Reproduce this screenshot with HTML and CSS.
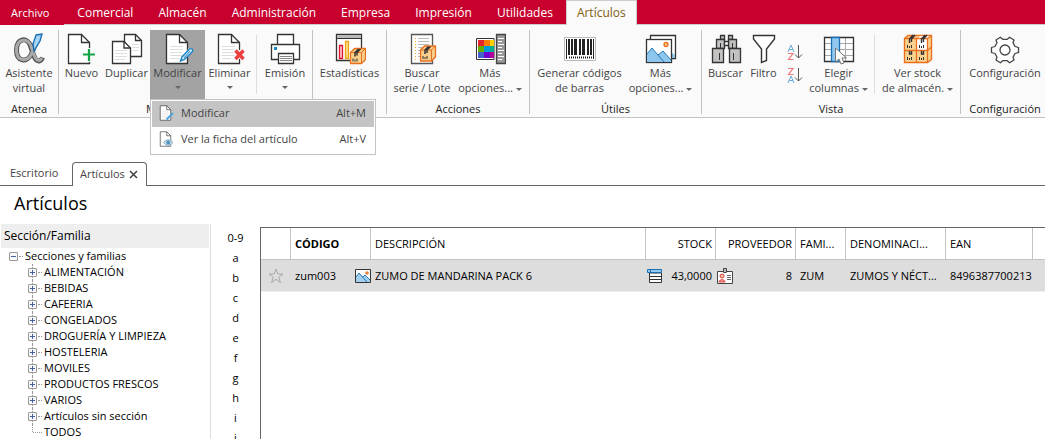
FILE: index.html
```html
<!DOCTYPE html>
<html lang="es">
<head>
<meta charset="utf-8">
<title>Artículos</title>
<link rel="stylesheet" href="styles.css">
</head>
<body>
<svg class="defs" aria-hidden="true">
  <defs>
    <g id="sheet"><path d="M4.500 1.500H17.500L25.500 9.500V30.500H4.500Z" fill="#fff" stroke="#333" stroke-width="1.300"/><path d="M17.500 1.500V9.500H25.500" fill="none" stroke="#333" stroke-width="1.300"/></g>
    <g id="lines"><path d="M8 13.500H21M8 16.500H21M8 19.500H20M8 22.500H20M8 25.500H17" stroke="#ddd" fill="none"/></g>
    <g id="box"><path d="M1 5L5 1H16V12L12 16H1Z" fill="#f9cf8c" stroke="#e8701f" stroke-width="1.300" stroke-linejoin="round"/><path d="M1 5H12V16M12 5L16 1" fill="none" stroke="#e8701f"/><path d="M5.500 9V5L9 1.500M7.500 8V5L11 1.500" fill="none" stroke="#333" stroke-width="1.500"/><path d="M3.500 11V14M5.500 12V14M7.500 11V14" stroke="#333"/></g>
    <g id="picture"><rect x="1.500" y="5.500" width="25" height="23" fill="#fff" stroke="#333" stroke-width="1.300"/><path d="M2 20L7 14L13 21L18 17L26 26V28H2Z" fill="#8cc6ee"/><path d="M2 20L7 14L19 28M13 21L18 17L26 26" fill="none" stroke="#2679b5"/><circle cx="21" cy="10.500" r="2" fill="#fbc489" stroke="#e8701f" stroke-width="1.300"/></g>
  </defs>
</svg>

<header>
  <nav class="menubar" aria-label="Menú principal">
    <a class="file" href="#">Archivo</a>
    <a href="#">Comercial</a>
    <a href="#">Almacén</a>
    <a href="#">Administración</a>
    <a href="#">Empresa</a>
    <a href="#">Impresión</a>
    <a href="#">Utilidades</a>
    <a class="current" href="#" aria-current="page">Artículos</a>
  </nav>

  <div class="ribbon">
    <section class="group g-atenea">
      <div class="tools">
        <button class="tool"><svg viewBox="0 0 32 32"><path d="M29.500 24.500C27.500 30 23 28.500 21 23L17.500 13C14.500 3.500 3.500 5 3.500 17C3.500 29 14 30 18.500 21L22 11" fill="none" stroke="#555" stroke-width="5"/><path d="M28.800 25C27 29 23.500 28 21.500 23L18 13C15 4 3.500 5.500 3.500 17C3.500 28.500 14 29.500 18.500 21L22 12" fill="none" stroke="#aaa" stroke-width="3"/><path d="M23 2L29 1L27 8L21 18L20 11Z" fill="#a2d4f5" stroke="#1769aa" stroke-width="1.300"/></svg><span>Asistente<br>virtual</span></button>
      </div>
      <h2>Atenea</h2>
    </section>

    <section class="group g-mant">
      <div class="tools">
        <button class="tool"><svg viewBox="0 0 32 32"><use href="#sheet" x="-2"/><path d="M16 21.500H30M23 15V29" stroke="#fafafa" stroke-width="5"/><path d="M17 21.500H29M23 16V28" stroke="#14a54a" stroke-width="2.200"/></svg><span>Nuevo</span></button>
        <button class="tool"><svg viewBox="0 0 32 32"><path d="M13.500 1.500H24.500L30.500 7.500V23.500H13.500Z" fill="#fff" stroke="#333" stroke-width="1.300"/><path d="M24.500 1.500V7.500H30.500" fill="none" stroke="#333" stroke-width="1.300"/><path d="M21 11.500H28M21 14.500H28M21 17.500H28" stroke="#ddd"/><path d="M1.500 8.500H13L19.500 15V30.500H1.500Z" fill="#fff" stroke="#333" stroke-width="1.300"/><path d="M13 8.500V15H19.500" fill="none" stroke="#333" stroke-width="1.300"/><path d="M4 17.500H16M4 20.500H16M4 23.500H16M4 26.500H14" stroke="#ddd"/></svg><span>Duplicar</span></button>
        <div class="dropdown">
          <button class="tool open" aria-expanded="true"><svg viewBox="0 0 32 32"><use href="#sheet"/><use href="#lines"/><path d="M18 26L27 15L31 17L21 27L18 29Z" fill="#fff"/><path d="M18.500 28L20 24L27 16.500C29 14.500 32 16.500 30 19L22.500 26.500Z" fill="#d9eefb" stroke="#1c83c6" stroke-width="1.400"/><path d="M22 25L28 18" stroke="#1c83c6"/></svg><span>Modificar</span><i class="arrow"></i></button>
          <div class="menu" role="menu">
            <button role="menuitem" class="active"><svg viewBox="0 0 32 32"><use href="#sheet"/><use href="#lines"/><path d="M17 29L30 16" stroke="#4aa3dc" stroke-width="4"/></svg><span>Modificar</span><kbd>Alt+M</kbd></button>
            <button role="menuitem"><svg viewBox="0 0 32 32"><use href="#sheet"/><path d="M11 23Q20 12 30 23Q20 34 11 23Z" fill="#d3e5ef" stroke="#88a9bd" stroke-width="2"/><circle cx="20.500" cy="23" r="4" fill="#4b93c0"/></svg><span>Ver la ficha del artículo</span><kbd>Alt+V</kbd></button>
          </div>
        </div>
        <button class="tool"><svg viewBox="0 0 32 32"><use href="#sheet"/><use href="#lines"/><path d="M20 16L31 27M31 16L20 27" stroke="#fafafa" stroke-width="6"/><path d="M21.500 17.500L29.500 26M29.500 17.500L21.500 26" stroke="#ee3d3d" stroke-width="3.400"/></svg><span>Eliminar</span><i class="arrow"></i></button>
        <div class="divider"></div>
        <button class="tool"><svg viewBox="0 0 32 32"><g fill="#fff" stroke="#333" stroke-width="1.300"><path d="M8.500 11V1.500H24.500V11"/><path d="M2.500 11.500H30.500V26.500H2.500Z"/><path d="M9.500 20.500H24.500V30.500H9.500Z"/></g><path d="M5 14H8V17H5Z" fill="#1c83c6"/><path d="M11 23.500H23M11 25.500H23M11 27.500H23" stroke="#888"/></svg><span>Emisión</span><i class="arrow"></i></button>
      </div>
      <h2>Mantenimiento</h2>
    </section>

    <section class="group g-stats">
      <div class="tools">
        <button class="tool"><svg viewBox="0 0 32 32"><path d="M2.500 1.500H27.500V27.500H2.500Z" fill="#fff" stroke="#333" stroke-width="1.300"/><path d="M3 2H27V5H3Z" fill="#bbb"/><path d="M3 5.500H27" stroke="#333"/><path d="M5.500 12.500H8.500V25.500H5.500Z" fill="#fcc9cf" stroke="#df1230" stroke-width="1.300"/><path d="M11.500 8.500H14.500V25.500H11.500Z" fill="#fbe08b" stroke="#efa118" stroke-width="1.300"/><use href="#box" x="15.500" y="14.500"/></svg><span>Estadísticas</span></button>
      </div>
      <h2></h2>
    </section>

    <section class="group g-acc">
      <div class="tools">
        <button class="tool"><svg viewBox="0 0 32 32"><path d="M5.500 1.500H26.500V30.500H5.500Z" fill="#fff" stroke="#555" stroke-width="1.300"/><path d="M9.500 5V28" stroke="#f5a52a" stroke-dasharray="1 2"/><path d="M12 5.500H23M12 8.500H23M12 11.500H23M12 14.500H23M12 17.500H23M12 20.500H18M12 23.500H18" stroke="#bbb"/><use href="#box" x="13.500" y="12"/></svg><span>Buscar<br>serie / Lote</span></button>
        <button class="tool"><svg viewBox="0 0 32 32"><path d="M2.500 5.500H20V26.500H2.500Z" fill="#fff" stroke="#333"/><path d="M4 7H10V13H4Z" fill="#e3242b"/><path d="M10 7H16V13H10Z" fill="#ff7c00"/><path d="M16 7H20V13H16Z" fill="#ffd000"/><path d="M4 13H10V19H4Z" fill="#65ab00"/><path d="M10 13H16V19H10Z" fill="#009bd9"/><path d="M16 13H20V19H16Z" fill="#00ad91"/><path d="M4 19H10V25H4Z" fill="#4560cf"/><path d="M10 19H16V25H10Z" fill="#6f00cf"/><path d="M16 19H20V25H16Z" fill="#b3009d"/><path d="M22.500 1.500H31.500V30.500H22.500Z" fill="#999" stroke="#444" stroke-width="1.300"/><path d="M24 5.500H30M24 8.500H28M24 11.500H30M24 14.500H28M24 17.500H30M24 20.500H28M24 23.500H30M24 26.500H28" stroke="#fff"/></svg><span>Más<br>opciones... <i class="arrow"></i></span></button>
      </div>
      <h2>Acciones</h2>
    </section>

    <section class="group g-utiles">
      <div class="tools">
        <button class="tool"><svg viewBox="0 0 32 32"><path d="M.500 4.500H31.500V27.500H.500Z" fill="#fff" stroke="#bbb"/><path d="M2.500 6V26M29.500 6V26" stroke="#222"/><path d="M5 6V22M8 6V22M12 6V22M16 6V22M20 6V22M24 6V22M27 6V22" stroke="#222" stroke-width="2"/><path d="M10.500 6V22M18.500 6V22" stroke="#222"/><path d="M5 24.500H28" stroke="#222" stroke-width="2" stroke-dasharray="1 1"/></svg><span>Generar códigos<br>de barras</span></button>
        <button class="tool"><svg viewBox="0 0 32 32"><path d="M5.500 2.500H30.500V25.500H5.500Z" fill="#fff" stroke="#333" stroke-width="1.300"/><path d="M26 25V19L30 22V25Z" fill="#8cc6ee"/><use href="#picture" y="1"/></svg><span>Más<br>opciones... <i class="arrow"></i></span></button>
      </div>
      <h2>Útiles</h2>
    </section>

    <section class="group g-vista">
      <div class="tools">
        <button class="tool"><svg viewBox="0 0 32 32"><g fill="#c3c2c1" stroke="#333" stroke-width="1.300"><path d="M10.500 2.500H14.500V6.500H10.500ZM18.500 2.500H22.500V6.500H18.500Z"/><path d="M6.500 6.500H14.500V15.500H6.500ZM18.500 6.500H26.500V15.500H18.500Z"/><path d="M14.500 8.500H18.500V12.500H14.500Z" fill="#fff"/><path d="M2.500 15.500H13.500V29.500H2.500ZM19.500 15.500H30.500V29.500H19.500Z"/></g><path d="M10.500 10V15M9.500 20V27M22.500 10V15M23.500 20V27" stroke="#333"/></svg><span>Buscar</span></button>
        <button class="tool"><svg viewBox="0 0 32 32"><path d="M5.500 2.500H26.500V6L18.500 16V27.500L13.500 29.500V16L5.500 6Z" fill="#fff" stroke="#333" stroke-width="1.400"/></svg><span>Filtro</span></button>
        <div class="sorts">
          <button aria-label="Orden ascendente"><svg viewBox="0 0 16 18"><path d="M1 8L4 1L7 8M2 5.500H6" fill="none" stroke="#69abd8"/><path d="M1 9.500H6L1.500 15.500H6.500" fill="none" stroke="#ef777c" stroke-width="1.200"/><path d="M11.500 1V14M8 10.500L11.500 14L15 10.500" fill="none" stroke="#555"/></svg></button>
          <button aria-label="Orden descendente"><svg viewBox="0 0 16 18"><path d="M1 1.500H6L1.500 7.500H6.500" fill="none" stroke="#ef777c" stroke-width="1.200"/><path d="M1 16L4 9L7 16M2 13.500H6" fill="none" stroke="#69abd8"/><path d="M11.500 1V14M8 10.500L11.500 14L15 10.500" fill="none" stroke="#555"/></svg></button>
        </div>
        <button class="tool"><svg viewBox="0 0 32 32"><path d="M1.500 4.500H30.500V28.500H1.500Z" fill="#fff"/><path d="M2 10.500H30M2 16.500H30M2 22.500H30M22.500 5V28" stroke="#aaa"/><path d="M1.500 4.500H30.500V28.500H1.500Z" fill="none" stroke="#333" stroke-width="1.300"/><path d="M8.500 4.500H16.500V28.500H8.500Z" fill="#91c9f1" stroke="#1c70b2" stroke-width="1.300"/><path d="M12.500 15L23.500 25H19L21 30L18 31L16 26L12.500 29Z" fill="#fff" stroke="#777"/></svg><span>Elegir<br>columnas <i class="arrow"></i></span></button>
        <div class="divider"></div>
        <button class="tool"><svg viewBox="0 0 32 32"><path d="M2.500 5.500L6 2.500H29.500V26.500L25.500 29.500H2.500Z" fill="#fad391" stroke="#e8701f" stroke-width="1.400"/><path d="M15 6H25V17H15ZM18 3H28L25 6H15Z" fill="#fff"/><path d="M2.500 5.500H25.500V29.500M25.500 5.500L29.500 2.500M2.500 17.500H25.500L29.500 14M14.500 5.500V29.500" fill="none" stroke="#e8701f" stroke-width="1.300"/><path d="M7.500 10V6L11 2M9.500 9V6L13 2M19.500 10V6L23 2M21.500 9V6L25 2M7.500 18V21H9.500V18M19.500 18V21H21.500V18" fill="none" stroke="#333" stroke-width="1.400"/><path d="M5.500 12V15M7.500 13V15M9.500 12V15M17.500 12V15M19.500 13V15M21.500 12V15M5.500 24V27M7.500 25V27M9.500 24V27M17.500 24V27M19.500 25V27M21.500 24V27" stroke="#333"/></svg><span>Ver stock<br>de almacén. <i class="arrow"></i></span></button>
      </div>
      <h2>Vista</h2>
    </section>

    <section class="group g-conf">
      <div class="tools">
        <button class="tool"><svg viewBox="0 0 32 32"><g transform="translate(16 17)" fill="#fff" stroke="#444" stroke-width="1.300" stroke-linejoin="round"><path d="M13.500 -2.500V2.500L10 3.500L8 7.200L9 10L4.600 12.800L2 10.600H-2L-4.600 12.800L-9 10L-8 7.200L-10 3.500L-13.500 2.500V-2.500L-10 -3.500L-8 -7.200L-9 -10L-4.600 -12.800L-2 -10.600H2L4.600 -12.800L9 -10L8 -7.200L10 -3.500Z"/><circle r="5"/></g></svg><span>Configuración</span></button>
      </div>
      <h2>Configuración</h2>
    </section>
  </div>
</header>

<nav class="doctabs" aria-label="Ventanas">
  <a href="#">Escritorio</a>
  <div class="doctab"><a href="#" aria-current="page">Artículos</a><button aria-label="Cerrar"><svg viewBox="0 0 9 9"><path d="M1 1L8 8M8 1L1 8" stroke="#444" stroke-width="1.600"/></svg></button></div>
</nav>

<main>
  <h1>Artículos</h1>
  <div class="content">
    <aside>
      <h2>Sección/Familia</h2>
      <div class="root"><button class="node minus" aria-label="Contraer"></button><span>Secciones y familias</span></div>
      <ul class="tree">
        <li><button class="node" aria-label="Expandir"></button>ALIMENTACIÓN</li>
        <li><button class="node" aria-label="Expandir"></button>BEBIDAS</li>
        <li><button class="node" aria-label="Expandir"></button>CAFEERIA</li>
        <li><button class="node" aria-label="Expandir"></button>CONGELADOS</li>
        <li><button class="node" aria-label="Expandir"></button>DROGUERÍA Y LIMPIEZA</li>
        <li><button class="node" aria-label="Expandir"></button>HOSTELERIA</li>
        <li><button class="node" aria-label="Expandir"></button>MOVILES</li>
        <li><button class="node" aria-label="Expandir"></button>PRODUCTOS FRESCOS</li>
        <li><button class="node" aria-label="Expandir"></button>VARIOS</li>
        <li><button class="node" aria-label="Expandir"></button>Artículos sin sección</li>
        <li class="leaf">TODOS</li>
      </ul>
    </aside>
    <nav class="letters" aria-label="Índice alfabético">
      <a href="#">0-9</a><a href="#">a</a><a href="#">b</a><a href="#">c</a><a href="#">d</a><a href="#">e</a><a href="#">f</a><a href="#">g</a><a href="#">h</a><a href="#">i</a><a href="#">j</a>
    </nav>
    <div class="grid">
      <table>
        <colgroup><col class="c-star"><col class="c-code"><col><col class="c-stock"><col class="c-prov"><col class="c-fam"><col class="c-den"><col class="c-ean"><col class="c-more"></colgroup>
        <thead>
          <tr><th></th><th class="sorted">CÓDIGO</th><th>DESCRIPCIÓN</th><th class="num">STOCK</th><th class="num">PROVEEDOR</th><th>FAMI...</th><th>DENOMINACI...</th><th>EAN</th><th></th></tr>
        </thead>
        <tbody>
          <tr>
            <td class="star"><svg viewBox="0 0 16 16"><path d="M8 1L9.800 6H15L10.800 9.200L12.400 14.500L8 11.300L3.600 14.500L5.200 9.200L1 6H6.200Z" fill="none" stroke="#aaa"/></svg></td>
            <td><div class="cell icon-end">zum003<svg viewBox="0 0 16 14"><path d="M.500 .500H15.500V13.500H.500Z" fill="#fff"/><path d="M1 8L4 4L8 8L10 6L15 11V13H1Z" fill="#a3d0ef"/><path d="M1 8L4 4L12 13M8 8L10 6L15 11" fill="none" stroke="#2679b5"/><circle cx="12" cy="4" r="1.800" fill="#ef823d"/><path d="M.500 .500H15.500V13.500H.500Z" fill="none" stroke="#333"/></svg></div></td>
            <td>ZUMO DE MANDARINA PACK 6</td>
            <td><div class="cell icon-start"><svg viewBox="0 0 16 14"><path d="M2.500 4H14.500V13.500H2.500Z" fill="#fff" stroke="#333"/><path d="M3 7.500H14M3 10.500H14" stroke="#333"/><path d="M.500 .500H14.500V3.500H.500Z" fill="#91c9f1" stroke="#1c70b2"/><path d="M3.500 1V3" stroke="#1c70b2"/></svg>43,0000</div></td>
            <td><div class="cell icon-start prov"><svg viewBox="0 0 16 16"><path d="M.500 3.500H15.500V15.500H.500Z" fill="#fff" stroke="#444"/><path d="M6.500 .500H9.500V4.500H6.500Z" fill="#bbb" stroke="#444"/><path d="M2 14C2 11 8 11 8 14Z" fill="#f6a6a6" stroke="#d9413e"/><circle cx="5" cy="8" r="2" fill="#f8c1a3" stroke="#d9413e"/><path d="M10 7.500H14M10 9.500H14M10 11.500H14" stroke="#666"/></svg>8</div></td>
            <td>ZUM</td><td>ZUMOS Y NÉCT...</td><td>8496387700213</td><td></td>
          </tr>
        </tbody>
      </table>
    </div>
  </div>
</main>
</body>
</html>
```
FILE: styles.css
```css
* { box-sizing: border-box; }
body { margin: 0; height: 100vh; overflow: hidden; display: flex; flex-direction: column; background: #fff; color: #000; font: 11px/16px "Open Sans", "Noto Sans", sans-serif; }
h1, h2 { margin: 0; font-weight: 400; font-size: 11px; }
button { border: 0; padding: 0; margin: 0; background: none; font: inherit; color: inherit; }
a { color: inherit; text-decoration: none; }
svg { display: block; }
.defs { display: none; }

.menubar { display: flex; gap: 1px; height: 24px; background: #c8002d; color: #fff; font-size: 12px; line-height: 26px; }
.menubar a { padding: 0 12px; }
.menubar .file { height: 25px; padding: 0 15px 0 11px; background: #c8002d; font-size: 11px; z-index: 1; }
.menubar .current { height: 25px; padding: 0 10px; background: #fafafa; color: #806010; border: 1px solid #ccc; border-bottom: 0; line-height: 24px; z-index: 1; }

.ribbon { display: flex; height: 94px; padding-top: 5px; background: #fafafa; border-top: 1px solid #ccc; border-bottom: 1px solid #c3c3c3; color: #444; }
.group { flex: none; display: flex; flex-direction: column; height: 84px; border-right: 1px solid #c3c3c3; }
.group h2 { color: #222; text-align: center; height: 15px; line-height: 20px; }
.tools { display: grid; height: 69px; justify-content: center; }
.g-atenea { width: 59px; }
.g-mant { width: 254px; }
.g-stats { width: 74px; }
.g-acc { width: 143px; }
.g-utiles { width: 172px; }
.g-vista { width: 259px; }
.g-conf { border: 0; width: 88px; }
.g-mant .tools { grid-template-columns: 43px 47px 55px 49px 5px 52px; }
.g-acc .tools { grid-template-columns: 70px 66px; justify-content: start; }
.g-utiles .tools { grid-template-columns: 90px 72px; }
.g-vista .tools { grid-template-columns: 40px 36px 26px 62px 9px 78px; }

.tool { display: flex; flex-direction: column; align-items: center; line-height: 15px; white-space: nowrap; height: 69px; padding-top: 3px; }
.tool svg { width: 32px; height: 32px; }
.tool > .arrow { margin-top: 6px; }
.arrow { display: inline-block; border: 3px solid transparent; border-top-color: #666; border-bottom: 0; vertical-align: middle; }
.tool.open { width: 100%; background: #a3a3a3; }
.divider { width: 1px; height: 59px; margin: 5px auto 0; background: #ddd; }
.sorts { display: flex; flex-direction: column; gap: 5px; padding: 14px 0 0 5px; }
.sorts svg { width: 16px; height: 18px; }

.dropdown { position: relative; }
.menu { position: absolute; top: 69px; left: 0; z-index: 5; width: 226px; padding: 1px; background: #fff; border: 1px solid #c3c3c3; }
.menu button { display: flex; align-items: center; width: 100%; height: 26px; padding: 0 8px 3px 6px; text-align: left; }
.menu .active { background: #c4c4c4; }
.menu svg { width: 16px; height: 16px; margin-right: 7px; }
.menu kbd { margin-left: auto; font: inherit; }

.doctabs { display: flex; height: 24px; margin-top: 44px; padding-left: 10px; border-bottom: 1px solid #666; color: #444; line-height: 22px; flex: none; }
.doctabs > a { width: 62px; }
.doctab { display: flex; gap: 4px; align-items: center; height: 24px; padding: 0 8px 1px 7px; background: #fff; border: 1px solid #666; border-bottom: 0; border-radius: 4px 4px 0 0; }
.doctab svg { width: 9px; height: 9px; }

main { flex: 1; min-height: 0; display: flex; flex-direction: column; }
h1 { padding-left: 14px; height: 38px; font-size: 18px; line-height: 34px; }
.content { flex: 1; min-height: 0; display: flex; }
aside { width: 211px; flex: none; padding-left: 1px; border-right: 1px solid #ddd; }
aside h2 { height: 24px; margin-right: 1px; padding-left: 3px; background: #eee; font-size: 12px; line-height: 24px; }
.root, .tree li { display: flex; align-items: center; height: 16px; position: relative; }
.root { gap: 7px; padding-left: 8px; }
.tree { margin: 0; padding: 0 0 0 27px; list-style: none; }
.tree li { gap: 7px; }
.tree li::before { content: ""; position: absolute; left: 4px; top: 0; height: 16px; border-left: 1px dotted #999; }
.tree li::after, .root::after { content: ""; position: absolute; left: 10px; top: 8px; width: 4px; border-top: 1px dotted #999; }
.root::after { left: 18px; }
.tree .leaf { padding-left: 16px; }
.tree .leaf::before { height: 8px; }
.tree .leaf::after { left: 5px; width: 9px; }
.node { position: relative; z-index: 1; flex: none; width: 9px; height: 9px; border: 1px solid #999; border-radius: 1px; background: linear-gradient(#4560a8, #4560a8) center / 5px 1px no-repeat, linear-gradient(#4560a8, #4560a8) center / 1px 5px no-repeat, #f8f8f8; }
.node.minus { background: linear-gradient(#4560a8, #4560a8) center / 5px 1px no-repeat, #f8f8f8; }

.letters { width: 49px; flex: none; padding-top: 4px; text-align: center; overflow: hidden; }
.letters a { display: block; line-height: 20px; }

.grid { flex: 1; min-width: 0; margin-top: 3px; border: 1px solid #666; border-width: 1px 0 0 1px; }
table { width: 100%; table-layout: fixed; border-collapse: separate; border-spacing: 0; }
.c-star { width: 30px; }
.c-code, .c-prov { width: 80px; }
.c-stock { width: 70px; }
.c-fam { width: 50px; }
.c-den { width: 100px; }
.c-ean { width: 87px; }
.c-more { width: 12px; }
th, td { height: 32px; padding: 0 4px; text-align: left; font-weight: 400; white-space: nowrap; overflow: hidden; }
th { border-right: 1px solid #c3c3c3; border-bottom: 1px solid #c3c3c3; }
th:last-child { border-right: 0; }
td { background: #ddd; border-bottom: 1px solid #eee; }
.num { text-align: right; padding-right: 3px; }
.sorted { font-weight: 700; }
.star svg { width: 16px; height: 16px; margin-left: 3px; }
.cell { display: flex; align-items: center; justify-content: space-between; }
.cell svg { width: 16px; height: 14px; }
.icon-end { margin-right: -4px; }
.icon-start { margin-left: -3px; }
.prov svg { height: 16px; }
```
